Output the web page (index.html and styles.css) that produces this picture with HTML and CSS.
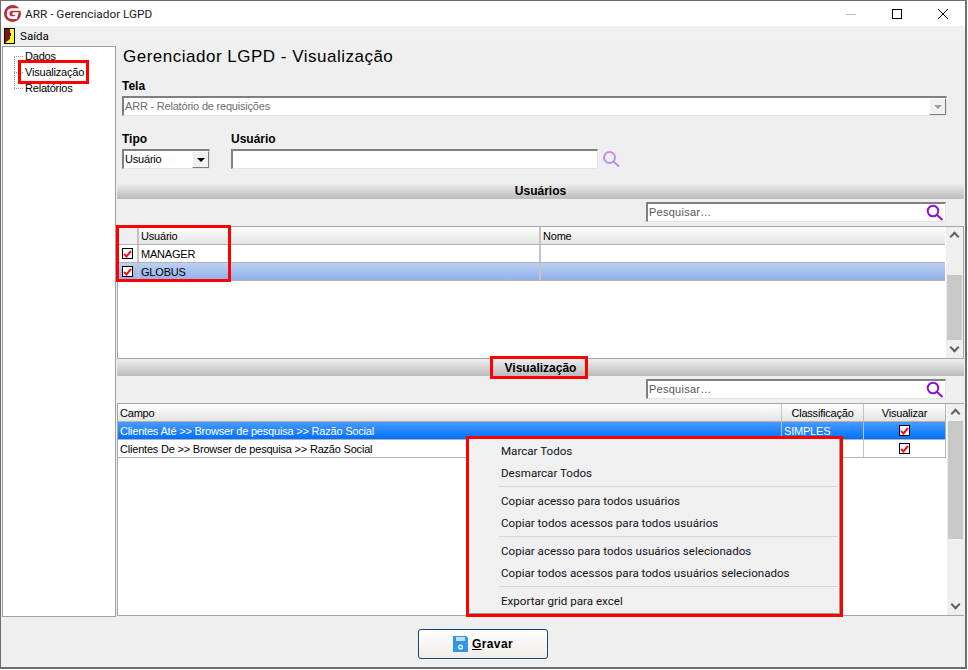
FILE: index.html
```html
<!DOCTYPE html>
<html lang="pt-BR">
<head>
<meta charset="utf-8">
<title>ARR - Gerenciador LGPD</title>
<link rel="stylesheet" href="styles.css">
</head>
<body>
<div class="window">
  <header class="titlebar">
    <svg class="logo" width="17" height="17" viewBox="0 0 18 18"><circle cx="9" cy="9" r="9" fill="#b5303a"/><path d="M18 4.8H9C6 4.8 4.4 6.8 4.4 9.2S6 13.4 9 13.4h3.6l1.2-4.2H9" fill="none" stroke="#fff" stroke-width="2.8"/></svg>
    <span class="title-text">ARR - Gerenciador LGPD</span>
    <div class="caption">
      <svg width="12" height="12" viewBox="0 0 12 12"><path d="M1 6.5h10" stroke="#bbb"/></svg>
      <svg width="12" height="12" viewBox="0 0 12 12"><rect x="1.5" y="1.5" width="9" height="9" fill="none" stroke="#000"/></svg>
      <svg width="12" height="12" viewBox="0 0 12 12"><path d="M1 1l10 10M11 1L1 11" stroke="#000" stroke-width="1"/></svg>
    </div>
  </header>
  <nav class="menubar">
    <svg width="11" height="16" viewBox="0 0 11 16"><rect width="11" height="16" fill="#000"/><rect x="1" y="1" width="9" height="14" fill="#ffff20"/><path d="M1 1h5v10l-5 4z" fill="#7a1414"/><rect x="6" y="5" width="1" height="3" fill="#000"/></svg>
    <span>Saída</span>
  </nav>
  <div class="main">
    <aside class="tree">
      <ul class="tree-list">
        <li>Dados</li>
        <li>Visualização</li>
        <li>Relatórios</li>
      </ul>
    </aside>
    <section class="content">
      <div class="form">
        <h1 class="heading">Gerenciador LGPD - Visualização</h1>
        <label class="label label-tela">Tela</label>
        <div class="field combo combo-disabled">
          <span class="field-text">ARR - Relatório de requisições</span>
          <span class="combo-btn disabled"><i></i></span>
        </div>
        <div class="form-row">
          <div class="col-tipo">
            <label class="label">Tipo</label>
            <div class="field combo"><span class="field-text dark">Usuário</span><span class="combo-btn"><i></i></span></div>
          </div>
          <div class="col-user">
            <label class="label">Usuário</label>
            <div class="field"></div>
          </div>
          <svg class="lookup" width="18" height="18" viewBox="0 0 18 18"><circle cx="7.5" cy="7.5" r="5.5" fill="none" stroke="#c58af0" stroke-width="2"/><path d="M11.5 11.5l5.5 5" stroke="#c58af0" stroke-width="2"/></svg>
        </div>
      </div>

      <div class="section-bar">Usuários</div>
      <div class="search-row">
        <div class="field search"><span class="placeholder">Pesquisar…</span>
          <svg width="18" height="18" viewBox="0 0 18 18"><circle cx="7" cy="7" r="5.3" fill="none" stroke="#8a10d8" stroke-width="2"/><path d="M11 11l5.5 5" stroke="#8a10d8" stroke-width="2"/></svg>
        </div>
      </div>
      <div class="grid-wrap grid-top">
        <div class="grid">
          <div class="grow users head"><div>&nbsp;</div><div>Usuário</div><div>Nome</div></div>
          <div class="grow users">
            <div class="cc"><span class="check"><svg width="9" height="8" viewBox="0 0 9 8"><path d="M1 4l2.5 2.5L8 1" fill="none" stroke="#f01020" stroke-width="2"/></svg></span></div>
            <div>MANAGER</div><div></div>
          </div>
          <div class="grow users sel-light">
            <div class="cc"><span class="check"><svg width="9" height="8" viewBox="0 0 9 8"><path d="M1 4l2.5 2.5L8 1" fill="none" stroke="#f01020" stroke-width="2"/></svg></span></div>
            <div>GLOBUS</div><div></div>
          </div>
        </div>
        <div class="scrollbar">
          <span class="arrow up"></span>
          <div class="track"><div class="thumb thumb-top"></div></div>
          <span class="arrow down"></span>
        </div>
      </div>

      <div class="section-bar section-second">Visualização</div>
      <div class="search-row">
        <div class="field search"><span class="placeholder">Pesquisar…</span>
          <svg width="18" height="18" viewBox="0 0 18 18"><circle cx="7" cy="7" r="5.3" fill="none" stroke="#8a10d8" stroke-width="2"/><path d="M11 11l5.5 5" stroke="#8a10d8" stroke-width="2"/></svg>
        </div>
      </div>
      <div class="grid-wrap grid-bottom">
        <div class="grid">
          <div class="grow fields head"><div>Campo</div><div class="center">Classificação</div><div class="center">Visualizar</div></div>
          <div class="grow fields sel-strong">
            <div>Clientes Até &gt;&gt; Browser de pesquisa &gt;&gt; Razão Social</div>
            <div>SIMPLES</div>
            <div class="cc"><span class="check"><svg width="9" height="8" viewBox="0 0 9 8"><path d="M1 4l2.5 2.5L8 1" fill="none" stroke="#f01020" stroke-width="2"/></svg></span></div>
          </div>
          <div class="grow fields">
            <div>Clientes De &gt;&gt; Browser de pesquisa &gt;&gt; Razão Social</div>
            <div>SIMPLES</div>
            <div class="cc"><span class="check"><svg width="9" height="8" viewBox="0 0 9 8"><path d="M1 4l2.5 2.5L8 1" fill="none" stroke="#f01020" stroke-width="2"/></svg></span></div>
          </div>
        </div>
        <div class="scrollbar">
          <span class="arrow up"></span>
          <div class="track"><div class="thumb thumb-bottom"></div></div>
          <span class="arrow down"></span>
        </div>
      </div>
    </section>
  </div>
  <footer class="footer">
    <button class="save" type="button">
      <svg width="15" height="16" viewBox="0 0 15 16"><path d="M0 0h13l2 2v14H0z" fill="#2f96e8"/><rect x="3" y="1" width="9" height="4" fill="#bfe0f8"/><circle cx="7.5" cy="11" r="2.6" fill="#fff"/><circle cx="7.5" cy="11" r="1.2" fill="#2f96e8"/></svg>
      <span><u>G</u>ravar</span>
    </button>
  </footer>
</div>

<div class="mark mark-tree"></div>
<div class="mark mark-users"></div>
<div class="mark mark-section"></div>

<div class="context-menu">
  <div class="mi">Marcar Todos</div>
  <div class="mi">Desmarcar Todos</div>
  <div class="sep"></div>
  <div class="mi">Copiar acesso para todos usuários</div>
  <div class="mi">Copiar todos acessos para todos usuários</div>
  <div class="sep"></div>
  <div class="mi">Copiar acesso para todos usuários selecionados</div>
  <div class="mi">Copiar todos acessos para todos usuários selecionados</div>
  <div class="sep"></div>
  <div class="mi">Exportar grid para excel</div>
</div>
</body>
</html>
```
FILE: styles.css
```css
* { box-sizing: border-box; }
html, body { margin: 0; padding: 0; height: 670px; overflow: hidden; background: #fff; }
body { position: relative; font: 11px/14px "Liberation Sans", Arial, sans-serif; letter-spacing: -.2px; color: #000; }

.window { width: 967px; height: 669px; border: 1px solid #6e6e6e; border-width: 1px 2px 2px 1px; background: #efefef; display: flex; flex-direction: column; }

.titlebar { height: 25px; background: #fff; display: flex; align-items: center; padding-left: 3px; flex: none; }
.logo { flex: none; }
.title-text { margin-left: 4px; font: 11.8px/16px Roboto, sans-serif; letter-spacing: 0; color: #1a1a1a; }
.caption { margin-left: auto; display: flex; gap: 34px; padding-right: 16px; align-items: center; }

.menubar { height: 20px; flex: none; display: flex; align-items: center; gap: 5px; padding-left: 3px; background: #f0f0f0; font: 11.6px/14px Roboto, sans-serif; letter-spacing: 0; }

.main { height: 571px; flex: none; display: flex; padding-left: 1px; }

.tree { width: 114px; height: 571px; flex: none; background: #fff; border: 1px solid #a0a0a0; }
.tree-list { list-style: none; margin: 0; padding: 1px 0 0 22px; position: relative; }
.tree-list::before { content: ""; position: absolute; left: 11px; top: 9px; height: 32px; border-left: 1px dotted #999; }
.tree-list li { height: 16px; line-height: 16px; position: relative; white-space: nowrap; }
.tree-list li::before { content: ""; position: absolute; left: -11px; top: 8px; width: 9px; border-top: 1px dotted #999; }

.content { width: 847px; flex: none; margin-left: 1px; display: flex; flex-direction: column; }
.form { padding: 0 0 0 5px; height: 137px; flex: none; }
.heading { margin: 0 0 0 1px; font: 400 17px/22px "Liberation Sans", Arial, sans-serif; letter-spacing: .5px; height: 22px; }
.label { display: block; font: 700 12px/14px "Liberation Sans", Arial, sans-serif; letter-spacing: 0; }
.label-tela { margin-top: 11px; margin-bottom: 3px; }

.field { height: 20px; background: #fff; border-style: solid; border-width: 2px 1px 1px 2px; border-color: #808080 #e4e4e4 #e4e4e4 #808080; display: flex; align-items: center; }
.field-text { padding: 0 0 1px 1px; color: #6d6d6d; flex: 1; white-space: nowrap; }
.field-text.dark { color: #000; }
.combo-disabled { width: 825px; }
.combo-btn { width: 17px; height: 17px; background: #f0f0f0; border: 1px solid; border-color: #fff #7d7d7d #7d7d7d #fff; display: flex; align-items: center; justify-content: center; flex: none; }
.combo-btn i { width: 0; height: 0; border: 4px solid transparent; border-top: 4px solid #000; border-bottom: 0; }
.combo-btn.disabled i { border-top-color: #9a9a9a; }

.form-row { display: flex; align-items: flex-end; margin-top: 16px; }
.col-tipo { width: 88px; }
.col-tipo .label, .col-user .label { margin-bottom: 3px; }
.col-user { width: 367px; margin-left: 21px; }
.lookup { margin: 0 0 1px 4px; }

.section-bar { height: 16px; flex: none; text-align: center; font: 700 12px/16px "Liberation Sans", Arial, sans-serif; letter-spacing: 0; background: linear-gradient(#efefef, #bbbbbb); }
.section-second { height: 17px; line-height: 18px; }
.search-row { height: 27px; flex: none; display: flex; justify-content: flex-end; padding: 3px 18px 0 0; }
.search { width: 300px; justify-content: space-between; padding-right: 1px; }
.placeholder { padding: 0 0 1px 1px; color: #555; letter-spacing: .25px; }

.grid-wrap { display: flex; border: 1px solid #a5a5a5; flex: none; background: #fff; }
.grid-top { height: 133px; }
.grid-bottom { height: 213px; }
.grid { width: 828px; }
.grow { display: grid; height: 18px; border-bottom: 1px solid #b2b2b2; }
.grow > div { padding: 1px 0 0 2px; border-right: 2px solid #c4c4c4; line-height: 16px; white-space: nowrap; overflow: hidden; }
.users { grid-template-columns: 21px 402px 1fr; }
.users > div:last-child { border-right: 0; }
.fields { grid-template-columns: 664px 82px 81px; border-right: 1px solid #b2b2b2; }
.fields > div:last-child { border-right: 0; }
.fields > div { border-right-width: 1px; }
.head { background: linear-gradient(#fff, #e4e4e4); }
.head.users > div:first-child { background: #efefef; }
.grow > .center { text-align: center; padding-left: 0; }
.grow > .cc { display: flex; align-items: center; justify-content: center; padding: 0; }
.check { width: 11px; height: 11px; background: #fff; border: 1px solid #000; display: flex; align-items: center; justify-content: center; }
.sel-light { background: linear-gradient(#bcd0f2, #8fb1ea); }
.sel-strong { background: linear-gradient(#4a9bff, #0070ff); color: #fff; }

.scrollbar { width: 17px; flex: none; background: #efefef; display: flex; flex-direction: column; align-items: center; margin-left: 1px; }
.track { flex: 1; width: 15px; }
.thumb { background: #c8c8c8; width: 100%; }
.thumb-top { margin-top: 31px; height: 65px; }
.thumb-bottom { height: 118px; }
.arrow { height: 17px; width: 100%; flex: none; position: relative; }
.arrow::after { content: ""; position: absolute; left: 5px; top: 6px; width: 5px; height: 5px; border-left: 2px solid #606060; border-top: 2px solid #606060; transform: rotate(45deg); }
.arrow.down::after { transform: rotate(225deg); top: 3px; }

.footer { flex: 1; display: flex; justify-content: center; padding: 12px 0 0 0; background: #efefef; }
.save { width: 130px; height: 30px; border: 1px solid #14477a; border-radius: 3px; background: linear-gradient(#fff, #f1ece8); display: flex; align-items: center; justify-content: center; gap: 4px; font: 700 12px/14px "Liberation Sans", Arial, sans-serif; letter-spacing: .4px; padding: 0; color: #000; }

.mark { position: absolute; border: 3px solid #f00; pointer-events: none; }
.mark-tree { left: 18px; top: 60px; width: 71px; height: 24px; }
.mark-users { left: 116px; top: 225px; width: 115px; height: 57px; }
.mark-section { left: 490px; top: 356px; width: 98px; height: 23px; }

.context-menu { position: absolute; left: 466px; top: 436px; width: 377px; height: 181px; border: 3px solid #f00; background: #f0f0f0; box-shadow: inset -1px -1px 0 #999; padding: 1px 0 0 0; font: 11.6px/22px Roboto, sans-serif; letter-spacing: 0; color: #10101a; }
.mi { height: 22px; padding-left: 32px; white-space: nowrap; }
.sep { height: 1px; background: #d6d6d6; margin: 2px 2px 3px 30px; }
```
